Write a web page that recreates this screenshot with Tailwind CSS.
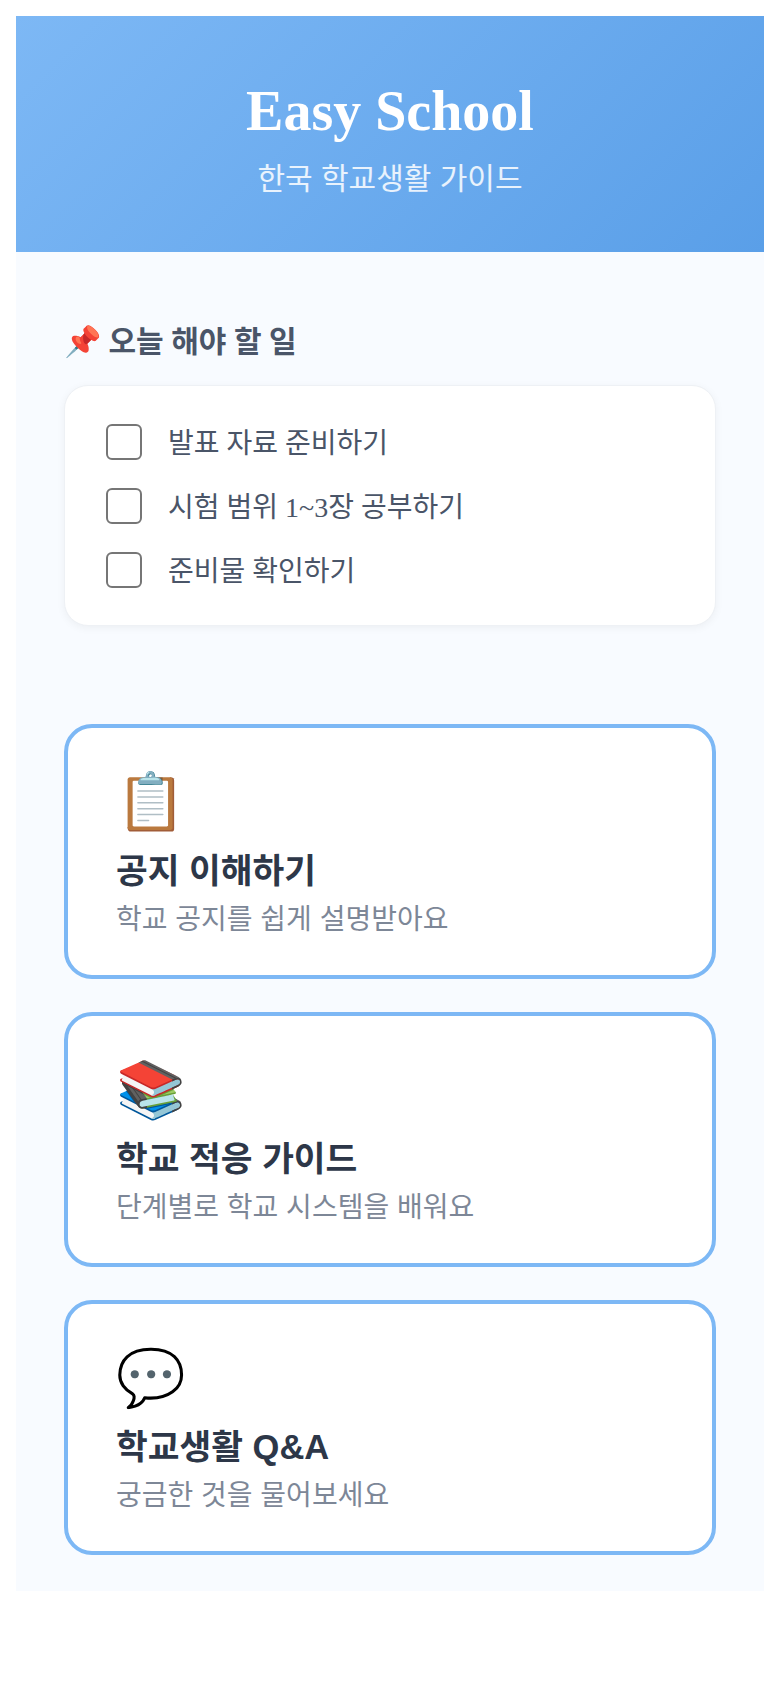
<!DOCTYPE html>
<html lang="ko">
<head>
    <meta charset="UTF-8">
    <meta name="viewport" content="width=device-width, initial-scale=1.0">
    <title>Easy School</title>
    <script src="https://cdn.jsdelivr.net/npm/@tailwindcss/browser@4"></script>
</head>
<body class="bg-white font-['Liberation_Serif','Noto_Sans_CJK_KR',serif]">
    <div class="mx-4 mt-4 mb-24 bg-[#f8fbff]">
        <header class="h-[236px] pt-[64px] text-center text-white bg-[linear-gradient(135deg,#7db8f5,#5a9fe8)]">
            <h1 class="text-[56px] leading-[62px] font-bold">Easy School</h1>
            <p class="mt-[17px] text-[30px] leading-[40px] text-white/85 font-['Liberation_Sans','Noto_Sans_CJK_KR',sans-serif]">한국 학교생활 가이드</p>
        </header>

        <main class="px-[48px] pt-[70px] pb-[36px]">
            <section>
                <h2 class="text-[30px] leading-[40px] font-bold text-[#4a5568]">📌 오늘 해야 할 일</h2>
                <div class="mt-[23px] h-[241px] px-[41px] py-[38px] flex flex-col gap-[28px] bg-white rounded-[24px] border border-[#eef1f5] shadow-[0_2px_8px_rgba(0,0,0,0.05)]">
                    <label class="h-[36px] flex items-start gap-[26px] text-[28px] text-[#4a5568]">
                        <span class="w-[36px] h-[36px] rounded-[6px] border-2 border-[#767676] bg-white"></span>
                        <span class="leading-[40px]">발표 자료 준비하기</span>
                    </label>
                    <label class="h-[36px] flex items-start gap-[26px] text-[28px] text-[#4a5568]">
                        <span class="w-[36px] h-[36px] rounded-[6px] border-2 border-[#767676] bg-white"></span>
                        <span class="leading-[40px]">시험 범위 1~3장 공부하기</span>
                    </label>
                    <label class="h-[36px] flex items-start gap-[26px] text-[28px] text-[#4a5568]">
                        <span class="w-[36px] h-[36px] rounded-[6px] border-2 border-[#767676] bg-white"></span>
                        <span class="leading-[40px]">준비물 확인하기</span>
                    </label>
                </div>
            </section>

            <nav class="mt-[98px] flex flex-col gap-[33px] font-['Liberation_Sans','Noto_Sans_CJK_KR',sans-serif]">
                <a class="h-[255px] pl-[48px] pt-[39px] block bg-white rounded-[28px] border-4 border-[#7db8f5]">
                    <div class="text-[56px] leading-[70px]">📋</div>
                    <h3 class="mt-[12px] text-[34.5px] leading-[44px] font-bold text-[#2d3748]">공지 이해하기</h3>
                    <p class="mt-[7px] text-[28px] leading-[40px] text-[#7d8797]">학교 공지를 쉽게 설명받아요</p>
                </a>
                <a class="h-[255px] pl-[48px] pt-[39px] block bg-white rounded-[28px] border-4 border-[#7db8f5]">
                    <div class="text-[56px] leading-[70px]">📚</div>
                    <h3 class="mt-[12px] text-[34.5px] leading-[44px] font-bold text-[#2d3748]">학교 적응 가이드</h3>
                    <p class="mt-[7px] text-[28px] leading-[40px] text-[#7d8797]">단계별로 학교 시스템을 배워요</p>
                </a>
                <a class="h-[255px] pl-[48px] pt-[39px] block bg-white rounded-[28px] border-4 border-[#7db8f5]">
                    <div class="text-[56px] leading-[70px]">💬</div>
                    <h3 class="mt-[12px] text-[34.5px] leading-[44px] font-bold text-[#2d3748]">학교생활 Q&amp;A</h3>
                    <p class="mt-[7px] text-[28px] leading-[40px] text-[#7d8797]">궁금한 것을 물어보세요</p>
                </a>
            </nav>
        </main>
    </div>
</body>
</html>
